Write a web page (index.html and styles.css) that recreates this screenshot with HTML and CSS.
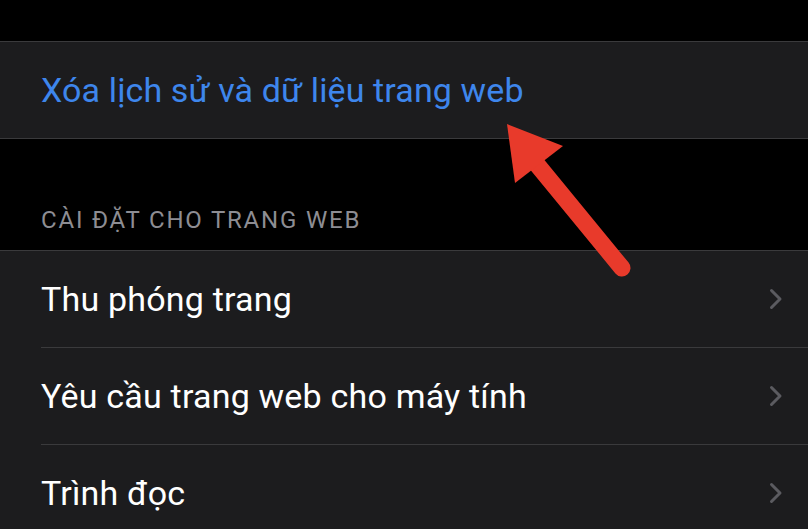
FILE: index.html
```html
<!DOCTYPE html>
<html lang="vi">
<head>
<meta charset="utf-8">
<link rel="stylesheet" href="styles.css">
</head>
<body>
<div class="screen">
  <div class="spacer-top"></div>
  <div class="group">
    <div class="cell action"><span>Xóa lịch sử và dữ liệu trang web</span></div>
  </div>
  <div class="section-header">CÀI ĐẶT CHO TRANG WEB</div>
  <div class="group">
    <div class="cell nav">
      <span>Thu phóng trang</span>
      <svg class="chev" viewBox="0 0 14 22" width="14" height="22"><path d="M2.5 2.5 L11 11 L2.5 19.5" fill="none" stroke="#5b5b60" stroke-width="3" stroke-linecap="round" stroke-linejoin="round"/></svg>
    </div>
    <div class="cell nav">
      <span>Yêu cầu trang web cho máy tính</span>
      <svg class="chev" viewBox="0 0 14 22" width="14" height="22"><path d="M2.5 2.5 L11 11 L2.5 19.5" fill="none" stroke="#5b5b60" stroke-width="3" stroke-linecap="round" stroke-linejoin="round"/></svg>
    </div>
    <div class="cell nav">
      <span>Trình đọc</span>
      <svg class="chev" viewBox="0 0 14 22" width="14" height="22"><path d="M2.5 2.5 L11 11 L2.5 19.5" fill="none" stroke="#5b5b60" stroke-width="3" stroke-linecap="round" stroke-linejoin="round"/></svg>
    </div>
  </div>
  <svg class="arrow" viewBox="0 0 808 529" width="808" height="529">
    <line x1="622" y1="268" x2="535" y2="162" stroke="#e83a2b" stroke-width="17" stroke-linecap="round"/>
    <polygon points="507,124 563,146 515,183" fill="#e83a2b"/>
  </svg>
</div>
</body>
</html>
```

FILE: styles.css
```css
html, body {
  margin: 0;
  padding: 0;
  background: #000;
}
.screen {
  position: relative;
  width: 808px;
  height: 529px;
  overflow: hidden;
  background: #000;
  font-family: "Roboto", "Noto Sans", sans-serif;
}
.spacer-top {
  height: 41px;
}
.group {
  background: #1c1c1e;
  border-top: 1px solid #3a3a3c;
  border-bottom: 1px solid #3a3a3c;
}
.cell {
  height: 96px;
  display: flex;
  align-items: center;
  margin-left: 41px;
  padding-right: 25px;
  box-sizing: border-box;
}
.cell + .cell {
  height: 97px;
  border-top: 1px solid #3a3a3c;
}
.action span {
  color: #3e86ec;
  font-size: 34px;
  letter-spacing: 0.12px;
}
.nav {
  justify-content: space-between;
}
.nav span {
  color: #fff;
  font-size: 34px;
  letter-spacing: 0.2px;
}
.section-header {
  height: 111px;
  box-sizing: border-box;
  padding: 67px 0 0 41px;
  color: #8d8d93;
  font-size: 24px;
  letter-spacing: 1.8px;
}
.arrow {
  position: absolute;
  left: 0;
  top: 0;
  pointer-events: none;
}
```
